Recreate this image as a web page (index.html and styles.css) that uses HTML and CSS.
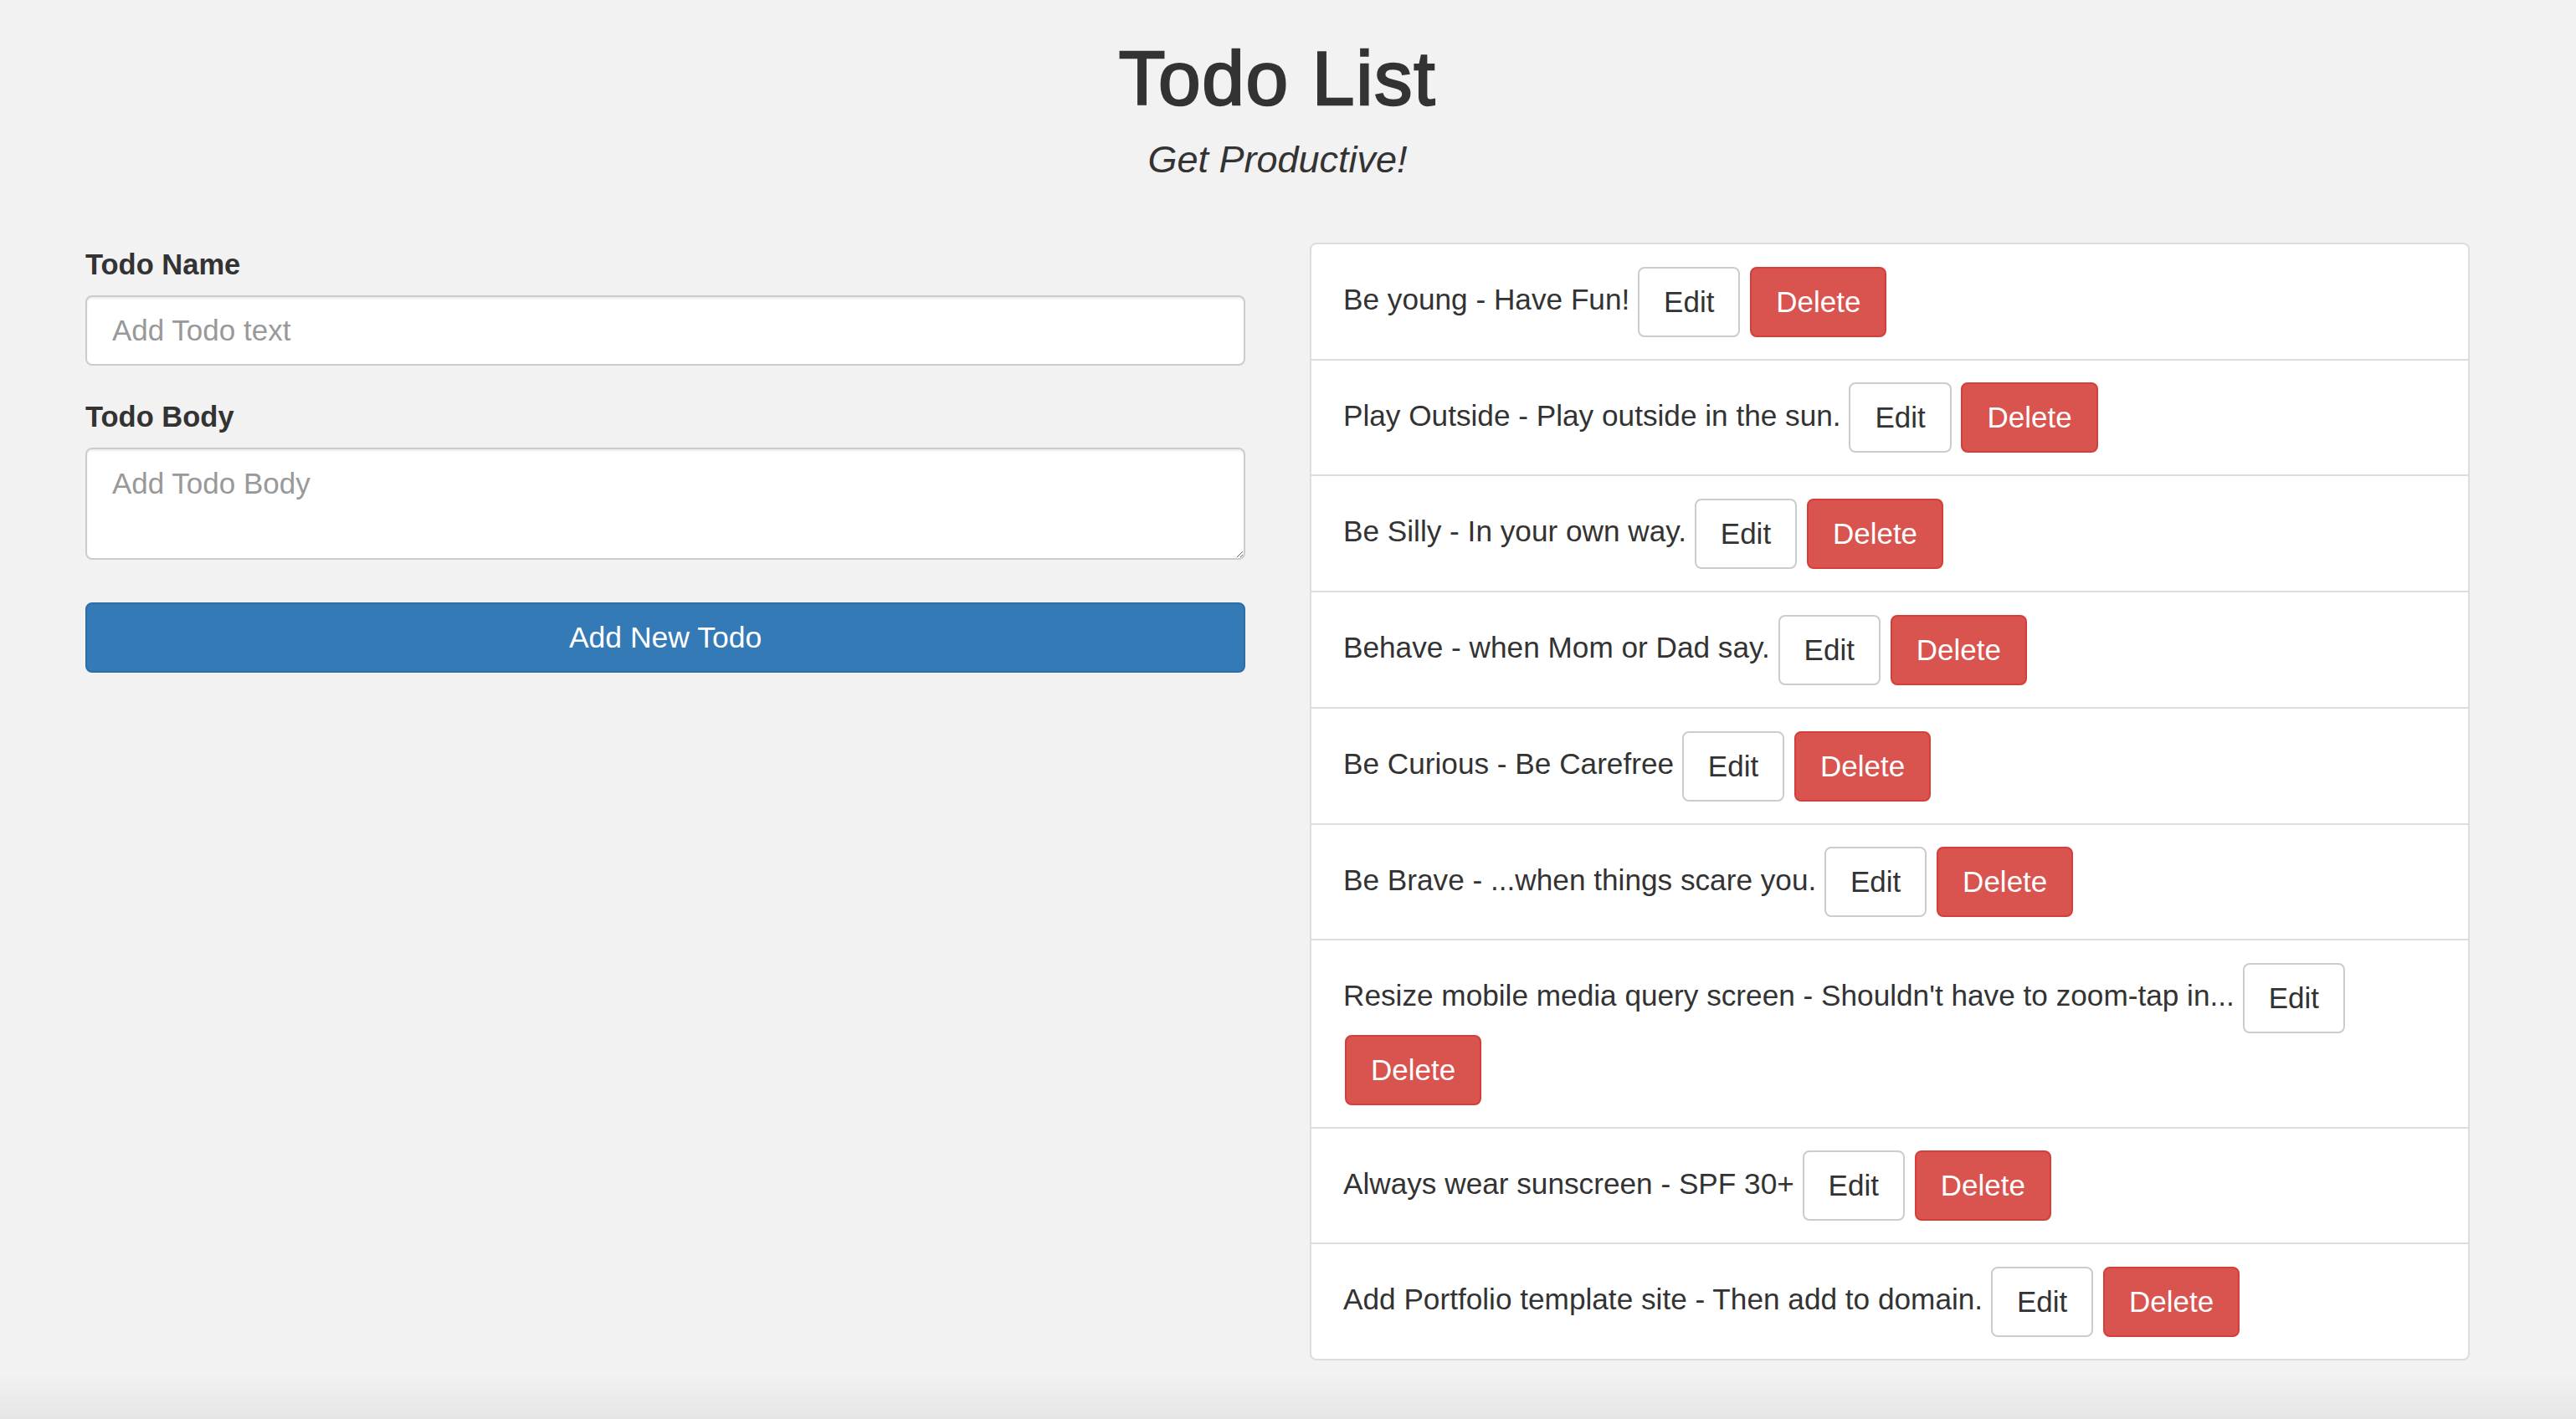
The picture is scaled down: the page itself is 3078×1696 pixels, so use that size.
FILE: index.html
```html
<!DOCTYPE html>
<html lang="en">
<head>
<meta charset="utf-8">
<title>Todo List</title>
<link rel="stylesheet" href="styles.css">
</head>
<body>
<div class="container">
  <header class="masthead">
    <h1 class="title">Todo List</h1>
    <p class="tagline">Get Productive!</p>
  </header>
  <main class="grid">
    <form class="todo-form">
      <div class="group">
        <label class="label" for="todo-name">Todo Name</label>
        <input class="field" id="todo-name" type="text" placeholder="Add Todo text">
      </div>
      <div class="group">
        <label class="label" for="todo-body">Todo Body</label>
        <textarea class="field field-area" id="todo-body" placeholder="Add Todo Body"></textarea>
      </div>
      <button class="btn btn-primary btn-block" type="button">Add New Todo</button>
    </form>
    <ul class="todo-list">
      <li class="todo-item"><span class="todo-text">Be young - Have Fun!</span> <button class="btn btn-default" type="button">Edit</button> <button class="btn btn-danger" type="button">Delete</button></li>
      <li class="todo-item"><span class="todo-text">Play Outside - Play outside in the sun.</span> <button class="btn btn-default" type="button">Edit</button> <button class="btn btn-danger" type="button">Delete</button></li>
      <li class="todo-item"><span class="todo-text">Be Silly - In your own way.</span> <button class="btn btn-default" type="button">Edit</button> <button class="btn btn-danger" type="button">Delete</button></li>
      <li class="todo-item"><span class="todo-text">Behave - when Mom or Dad say.</span> <button class="btn btn-default" type="button">Edit</button> <button class="btn btn-danger" type="button">Delete</button></li>
      <li class="todo-item"><span class="todo-text">Be Curious - Be Carefree</span> <button class="btn btn-default" type="button">Edit</button> <button class="btn btn-danger" type="button">Delete</button></li>
      <li class="todo-item"><span class="todo-text">Be Brave - ...when things scare you.</span> <button class="btn btn-default" type="button">Edit</button> <button class="btn btn-danger" type="button">Delete</button></li>
      <li class="todo-item"><span class="todo-text">Resize mobile media query screen - Shouldn't have to zoom-tap in...</span> <button class="btn btn-default" type="button">Edit</button> <button class="btn btn-danger" type="button">Delete</button></li>
      <li class="todo-item"><span class="todo-text">Always wear sunscreen - SPF 30+</span> <button class="btn btn-default" type="button">Edit</button> <button class="btn btn-danger" type="button">Delete</button></li>
      <li class="todo-item"><span class="todo-text">Add Portfolio template site - Then add to domain.</span> <button class="btn btn-default" type="button">Edit</button> <button class="btn btn-danger" type="button">Delete</button></li>
    </ul>
  </main>
</div>
</body>
</html>
```

FILE: styles.css
```css
html {
  height: 100%;
  background: linear-gradient(to bottom, #f2f2f2 0, #f2f2f2 calc(100% - 56px), #e6e6e6 100%);
}

body {
  margin: 0;
  font-family: "Liberation Sans", Arial, sans-serif;
  font-size: 35.2px;
  color: #333;
}

.container {
  width: 2849px;
  margin-left: 102px;
}

.masthead {
  text-align: center;
}

.title {
  margin: 44px 0 0;
  font-size: 91px;
  line-height: 100px;
  font-weight: 400;
  letter-spacing: 1.7px;
  color: #333;
  -webkit-text-stroke: 2.4px #333;
}

.tagline {
  margin: 20px 0 0;
  font-size: 45px;
  line-height: 54px;
  font-style: italic;
}

.grid {
  display: grid;
  grid-template-columns: 1386px 1386px;
  column-gap: 77px;
  align-items: start;
  margin-top: 72px;
}

.todo-form {
  margin: 0;
}

.group {
  margin-bottom: 37px;
}

.label {
  display: block;
  margin: 2px 0 13px;
  font-size: 34.5px;
  font-weight: 700;
  line-height: 48px;
}

.field {
  display: block;
  box-sizing: border-box;
  width: 100%;
  height: 84px;
  padding: 0 30px;
  border: 2px solid #ccc;
  border-radius: 8px;
  background: #fff;
  box-shadow: inset 0 2px 2px rgba(0, 0, 0, 0.075);
  font-family: inherit;
  font-size: 35px;
  line-height: 48px;
  color: #555;
  outline: none;
}

.field::placeholder {
  color: #999;
}

.field-area {
  height: 134px;
  padding: 17px 30px;
  resize: vertical;
}

.btn {
  display: inline-block;
  box-sizing: border-box;
  height: 84px;
  padding: 0 29px;
  border: 2px solid transparent;
  border-radius: 8px;
  font-family: inherit;
  font-size: 35px;
  line-height: 80px;
  vertical-align: middle;
  cursor: pointer;
}

.btn-default {
  background: #fff;
  border-color: #ccc;
  color: #333;
}

.btn-danger {
  margin-left: 2px;
  background: #d9534f;
  border-color: #d43f3a;
  color: #fff;
}

.btn-primary {
  background: #337ab7;
  border-color: #2e6da4;
  color: #fff;
}

.btn-block {
  display: block;
  width: 100%;
  margin-top: 51px;
  margin-left: 0;
  font-size: 35.5px;
}

.todo-list {
  list-style: none;
  margin: 0;
  padding: 0;
  background: #fff;
  border: 2px solid #ddd;
  border-radius: 8px;
}

.todo-item {
  padding: 25px 38px 26px;
  line-height: 82px;
}

.todo-item + .todo-item {
  border-top: 2px solid #ddd;
}
```
